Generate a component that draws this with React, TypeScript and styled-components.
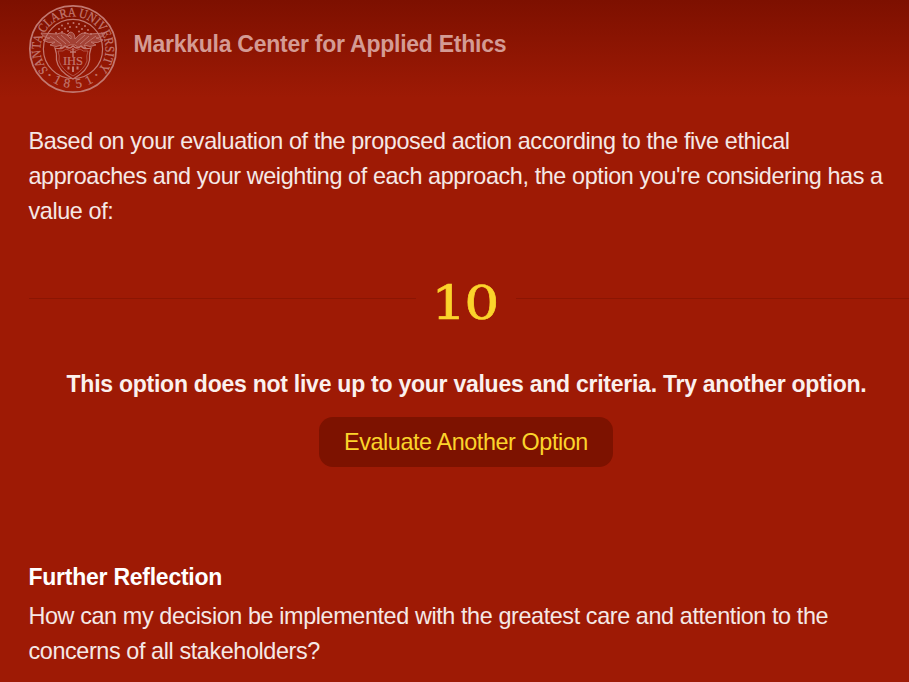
import React from "react";
import styled, { createGlobalStyle } from "styled-components";

const GlobalStyle = createGlobalStyle`
  * { box-sizing: border-box; }
  html, body { margin: 0; padding: 0; background: #9e1a05; overflow: hidden; }
  body { font-family: "Liberation Sans", Arial, sans-serif; }
`;

const Page = styled.main`
  width: 909px;
  height: 682px;
  overflow: hidden;
  color: #f5e8e6;
  background: linear-gradient(#7d1000 0, #9e1a05 98px) #9e1a05;
`;

const Header = styled.header`
  display: flex;
  align-items: flex-start;
  height: 98px;
  padding: 4px 0 0 28px;
`;

const Brand = styled.h1`
  margin: 24px 0 0 15.5px;
  color: #d49b94;
  font-size: 23px;
  line-height: 32px;
  font-weight: 700;
  letter-spacing: -0.25px;
  white-space: nowrap;
`;

const Body = styled.div`
  padding: 26px 0 0 28.5px;
`;

const Copy = styled.p`
  margin: 0;
  font-size: 23.4px;
  line-height: 35px;
  letter-spacing: -0.4px;
  white-space: nowrap;
`;

const ScoreRow = styled.div`
  display: grid;
  grid-template-columns: 387.5px 100px 393px;
  height: 60px;
  margin-top: 42px;
`;

const Rule = styled.span`
  height: 1px;
  margin-top: 27px;
  background: #8b1503;
`;

const Score = styled.strong`
  display: flex;
  justify-content: center;
  padding-right: 3px;
  color: #fbd42b;
  font-family: "DejaVu Serif", serif;
  font-weight: 400;
  font-size: 46px;
  line-height: 64px;
  letter-spacing: -1.8px;
  -webkit-text-stroke: 0.6px #fbd42b;
  transform: scaleX(1.2);
`;

const Verdict = styled.p`
  margin: 36px 0 0;
  width: 876px;
  color: #fbf0ee;
  font-size: 23px;
  font-weight: 700;
  line-height: 35px;
  letter-spacing: -0.25px;
  text-align: center;
  white-space: nowrap;
`;

const Action = styled.button`
  display: block;
  width: 294px;
  height: 50px;
  margin: 15px 0 0 290.5px;
  padding: 0;
  border: 0;
  border-radius: 14px;
  background: #7d1200;
  color: #fbd42b;
  font: 23.4px/50px "Liberation Sans", Arial, sans-serif;
  letter-spacing: -0.42px;
`;

const Subhead = styled.h2`
  margin: 93px 0 4px;
  color: #fff;
  font-size: 23px;
  line-height: 35px;
  letter-spacing: -0.25px;
`;

const SealArt = styled.svg`
  display: block;
  width: 90px;
  height: 90px;
  flex: none;
`;

const stars = [
  [34, 21.5], [40, 19.5], [45.5, 19], [51, 20], [57, 22], [31, 25], [37, 24.5],
  [42, 23], [48.5, 23], [54, 25], [60, 26], [28, 29], [34, 28], [40, 27],
  [51, 27.5], [57, 29], [63, 30],
];

const year: [string, number][] = [
  ["•", 42], ["1", 27], ["8", 10], ["5", -9], ["1", -27], ["•", -42],
];

function Seal() {
  return (
    <SealArt viewBox="0 0 90 90" fill="none" stroke="#c27870" aria-label="Santa Clara University">
      <circle cx="45" cy="45" r="43.2" strokeWidth="1.7" />
      <circle cx="45" cy="45" r="29.6" strokeWidth="1.2" />
      <defs>
        <path id="seal-name" d="M22.3 68.5A32.6 32.6 0 1 1 67.7 68.5" />
      </defs>
      <g fill="#c27870" stroke="none" fontFamily="Liberation Serif, serif">
        <text fontSize="13" stroke="#c27870" strokeWidth="0.25">
          <textPath href="#seal-name" startOffset="3" textLength="147" lengthAdjust="spacingAndGlyphs">
            SANTA CLARA UNIVERSITY
          </textPath>
        </text>
        {year.map(([char, angle]) => (
          <text
            key={angle}
            x="45"
            y={char === "•" ? 82.5 : 84}
            fontSize={char === "•" ? 8 : 13}
            stroke="#c27870"
            strokeWidth="0.2"
            textAnchor="middle"
            transform={`rotate(${angle} 45 45)`}
          >
            {char}
          </text>
        ))}
        {stars.map(([x, y]) => (
          <circle key={`${x}-${y}`} cx={x} cy={y} r="1" />
        ))}
      </g>
      <path
        d="M43 35Q36 26 29 30L13 29Q15 34 22 34L15 36Q20 40 27 38L22 41Q28 44 34 41L32 44Q39 44 42 41L47 41Q51 45 58 44L56 41Q62 44 68 41L63 38Q70 40 75 36L68 34Q75 34 77 29L61 30Q54 26 47 35Q47 28 42 28L39 31L43 32Z"
        fill="#c27870"
        fillOpacity="0.45"
        strokeWidth="0.9"
      />
      <path d="M29 32L38 40M33 31L42 39M22 32L33 40M61 32L52 40M57 31L48 39M68 32L57 40" strokeWidth="0.9" />
      <path
        d="M27 44Q34 46 37 42Q41 46 45 42Q49 46 53 42Q56 46 63 44Q61 49 61.5 56Q60 67 45 75Q30 67 28.5 56Q29 49 27 44Z"
        fill="#941604"
        strokeWidth="1.3"
      />
      <path d="M30 47Q36 48 38 45Q42 48 45 45Q48 48 52 45Q55 48 60 47Q58 52 59 57Q56 66 45 72Q34 66 31 57Q32 52 30 47Z" strokeWidth="0.6" />
      <path d="M45 44V53M42 48H48" strokeWidth="1.4" />
      <text x="45" y="60.5" textAnchor="middle" fontSize="12.5" fontFamily="Liberation Serif, serif" fill="#c27870" strokeWidth="0.2">
        IHS
      </text>
      <path d="M40.5 62.5V65.5M45 62.5V68M49.5 62.5V65.5" strokeWidth="2" />
    </SealArt>
  );
}

export default function App() {
  return (
    <>
      <GlobalStyle />
      <Page>
        <Header>
          <Seal />
          <Brand>Markkula Center for Applied Ethics</Brand>
        </Header>
        <Body>
          <Copy>
            Based on your evaluation of the proposed action according to the five ethical
            <br />
            approaches and your weighting of each approach, the option you're considering has a
            <br />
            value of:
          </Copy>
          <ScoreRow>
            <Rule />
            <Score>10</Score>
            <Rule />
          </ScoreRow>
          <Verdict>This option does not live up to your values and criteria. Try another option.</Verdict>
          <Action>Evaluate Another Option</Action>
          <Subhead>Further Reflection</Subhead>
          <Copy>
            How can my decision be implemented with the greatest care and attention to the
            <br />
            concerns of all stakeholders?
          </Copy>
        </Body>
      </Page>
    </>
  );
}
